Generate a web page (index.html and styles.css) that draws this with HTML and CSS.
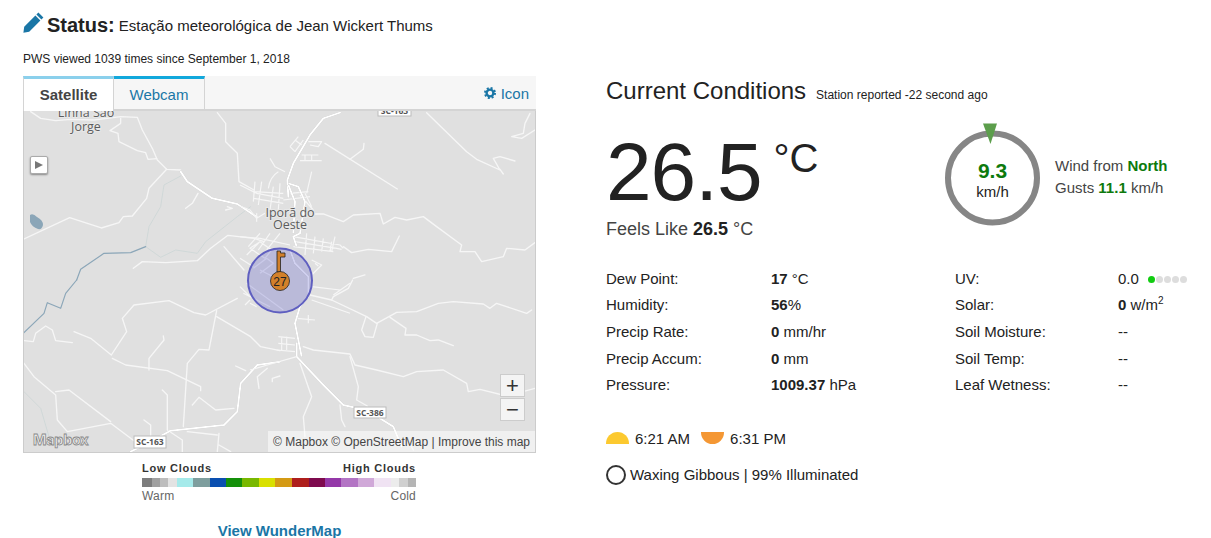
FILE: index.html
```html
<!DOCTYPE html>
<html lang="en">
<head>
  <meta charset="UTF-8">
  <title>Status: Estação meteorológica de Jean Wickert Thums</title>
  <link rel="stylesheet" href="styles.css">
</head>
<body>
  <div class="page">
    <section class="left">
      <h2 class="status">
        <svg class="pencil" width="21" height="21" viewBox="0 0 21 21"><path d="M15.4 0.6 L20.4 5.6 L18.4 7.6 L13.4 2.6 Z M12.4 3.6 L17.4 8.6 L6.2 19.8 L0.4 20.8 L1.2 14.8 Z"/></svg>
        <strong>Status:</strong>
        <span>Estação meteorológica de Jean Wickert Thums</span>
      </h2>
      <p class="views">PWS viewed 1039 times since September 1, 2018</p>

      <div class="panel">
        <div class="tabs">
          <div class="tab tab-on">Satellite</div>
          <div class="tab tab-off">Webcam</div>
          <a class="tab-icon" href="#">
            <svg width="12" height="12" viewBox="0 0 12 12"><circle cx="6" cy="6" r="3.4" fill="none" stroke="#1a76a6" stroke-width="2.4"/><circle cx="6" cy="6" r="5" fill="none" stroke="#1a76a6" stroke-width="2" stroke-dasharray="2 1.93"/></svg>
            Icon
          </a>
        </div>
        <div class="map">
          <svg class="map-art" width="512" height="342" viewBox="24 111 512 342">
            <path class="lake" d="M30 215 Q33 213 37 217 Q43 220 43 225 Q42 230 38 229 Q32 227 30 222 Z"/>
            <g class="road" transform="translate(24 110) scale(.3333)">
              <path class="stream" d="M470 198 L420 225 L410 290 L375 350 L365 410 L410 442 L455 420 L520 430 L545 395 L640 320 L680 290"/>
              <path class="river" d="M158 510 L170 478 L240 430 L320 428 L365 410"/>
              <path d="M20 5 L50 25 L95 32 L140 28 L210 30 L290 20 L340 22 L355 60 L385 115 L400 150 L428 178 L470 180"/>
              <path d="M290 25 L290 40 L258 62 L282 70 L285 95 L340 122 L365 128 L372 148 L398 146"/>
              <path d="M428 178 L375 235 L368 265 L325 318 L298 320 L285 338 L232 354 L137 323 L0 387"/>
              <path d="M522 250 L505 280 L485 295"/>
              <path d="M580 8 L605 40 L605 95 L640 130 L645 215 L690 240"/>
              <path d="M328 475 L355 455 L425 458 L520 452 L560 415 L612 376 L690 385 L720 395"/>
              <path d="M600 410 L660 480"/>
              <path d="M605 300 L625 295 L610 290"/>
              <path class="hwy" d="M470 185 L490 215 L565 265 L640 282 L700 322"/>
            </g>
            <g class="road" transform="translate(280 110) scale(.3333)">
              <path d="M135 100 L352 237"/>
              <path d="M210 148 L250 118 L252 100"/>
              <path d="M440 8 L560 125 L590 148 L660 180 L640 145 L660 140 L705 153"/>
              <path d="M660 178 L670 192"/>
              <path d="M750 10 L735 40 L730 70 L695 80 L725 85 L765 60"/>
              <path d="M100 312 L130 312 L190 335 L220 315 L300 310 L310 342 L345 322 L380 330 L430 320 L470 350 L545 405 L540 425 L585 425 L605 455 L670 440 L680 415 L735 420 L765 398"/>
              <path d="M190 410 L215 428 L265 418 L335 425 L358 378"/>
              <path d="M220 505 L255 495"/>
              <path class="hwy" d="M180 8 L130 25 L90 75 L40 160 L22 210 L25 260"/>
            </g>
            <g class="road" transform="translate(24 280) scale(.3333)">
              <path class="stream" d="M0 335 L50 385 L75 470"/>
              <path class="river" d="M0 158 L60 100 L70 68 L110 85 L125 40 L158 0"/>
              <path d="M0 182 L28 185 L35 160 L65 138 L85 150 L95 182 L145 188"/>
              <path d="M150 155 L200 175 L262 225 L308 155 L295 115 L330 75 L435 62 L510 98 L545 105 L640 55"/>
              <path d="M265 235 L305 255 L430 272 L530 320 L530 332"/>
              <path d="M375 270 L375 235 L420 180 L418 168"/>
              <path d="M578 92 L555 210 L525 208 L490 250 L478 440"/>
              <path d="M578 110 L680 170 L710 200 L768 212"/>
              <path d="M0 250 L30 290 L95 345 L100 420 L130 455 L260 430 L340 490"/>
              <path d="M95 335 L135 330 L260 425"/>
              <path d="M415 330 L430 345 L430 450 L475 480 L475 515"/>
              <path d="M360 420 L380 435 L380 470"/>
              <path d="M505 375 L525 352 L575 390 L630 385"/>
              <path d="M635 258 L665 272"/>
              <path d="M705 325 L700 290 L730 265"/>
              <path d="M745 305 L745 295 L768 288"/>
              <path d="M585 460 L580 515 M585 495 L620 515 M490 455 L580 465"/>
              <path class="hwy" d="M320 515 L370 490 L440 452 L600 435 L640 395 L650 310 L700 255 L768 245"/>
            </g>
            <g class="road" transform="translate(280 280) scale(.3333)">
              <path d="M90 45 L155 60 L260 110 L290 130 L350 97 L410 95 L475 70 L520 65 L610 72 L630 85 L650 70 L740 100 L755 90"/>
              <path d="M155 60 L160 50 L205 25 L218 0"/>
              <path d="M258 110 L245 150 L255 170 L280 172 L292 130"/>
              <path d="M330 112 L378 145 L375 165 L410 165 L450 182 L475 180 L520 197"/>
              <path d="M70 200 L100 210 L210 222 L225 255 L290 270 L370 290 L410 275 L490 270 L560 310 L565 335 L600 328 L680 348 L765 325"/>
              <path d="M210 230 L235 320 L230 360 L262 378"/>
              <path d="M60 250 L95 350 L70 410 L75 470"/>
              <path d="M180 375 L185 420 L195 440"/>
              <path d="M380 475 L400 510"/>
              <path class="hwy" d="M50 190 L50 230 L130 315 L190 375 L220 382 M300 415 L340 440 L365 500"/>
            </g>
            <g class="town" transform="translate(240 130) scale(.3333)">
              <path d="M150 50 L175 20 M165 65 L190 30 M150 50 L165 65 M165 30 L185 45 M205 35 L245 35 L235 50 L210 45"/>
              <path d="M185 75 L235 75 M180 92 L245 92 M195 75 L195 92 M215 75 L215 92"/>
              <path d="M90 85 L105 110 L135 125 M115 125 Q90 140 85 175 M215 125 L200 190"/>
              <path d="M45 155 L40 215 M65 155 L55 225 M0 165 L50 190 L130 205 M40 185 L130 190 M40 205 L130 220 M100 170 L90 240 M120 160 L115 240 M150 190 L205 185 M130 210 L210 200 M180 195 L220 240 M195 190 L215 230"/>
              <path d="M0 228 L30 240 L50 265 L75 250 M50 250 L50 275"/>
              <path d="M0 320 L60 325 L150 345 M160 320 L300 345 L310 355 M165 335 L290 355 L305 358 M160 350 L280 365 M200 310 L195 375 M225 320 L220 370 M250 325 L245 365 M275 335 L270 365 M285 320 L275 365"/>
              <path d="M30 355 L60 335 L95 360 L75 385 Z M60 310 L25 350 M90 310 L55 360 M120 310 L80 360 M20 375 L60 335 M0 385 L40 410"/>
              <path d="M40 415 L80 385 L100 400 L60 430 M100 440 L60 420 M0 470 L30 500 M20 460 L130 540 M10 490 L90 530 M30 510 L15 525 M50 530 L30 520"/>
              <path d="M215 390 L245 405 L215 435 M225 400 L235 408 M215 470 L300 480 M280 495 L330 460 M215 510 L330 550"/>
              <path d="M170 565 L225 570 M205 555 L205 580"/>
              <path d="M115 620 L165 625 M115 640 L165 645 M125 620 L125 660 M140 620 L140 660 M110 660 L165 665 M30 720 L100 700 L170 680"/>
              <path class="main" d="M145 160 L175 170 L195 215 L180 310 L160 320 L170 350"/>
              <path class="main" d="M145 165 L165 215 L160 310"/>
              <path class="main" d="M150 360 L165 400 L205 440 L205 500 L180 530 L165 580 L185 680"/>
            </g>
            <g class="labels">
              <text x="86" y="117" text-anchor="middle">Linha São</text>
              <text x="86" y="131" text-anchor="middle">Jorge</text>
              <text x="290" y="217" text-anchor="middle">Iporã do</text>
              <text x="290" y="229" text-anchor="middle">Oeste</text>
            </g>
            <g class="shield">
              <rect x="378" y="105" width="33" height="11"/><text x="394.500" y="114" text-anchor="middle">SC-163</text>
              <rect x="134" y="436" width="32" height="12"/><text x="150" y="445" text-anchor="middle">SC-163</text>
              <rect x="354" y="407" width="32" height="11"/><text x="370" y="416" text-anchor="middle">SC-386</text>
            </g>
            <circle class="halo" cx="280" cy="280.500" r="32"/>
            <path class="key" d="M277 251 H280.500 V253 H285 V257 H280.500 V272 H277 Z"/>
            <circle class="key" cx="280" cy="281" r="9.500"/>
            <text class="key-num" x="280" y="285.500" text-anchor="middle">27</text>
          </svg>
          <button class="play" type="button"><svg width="10" height="10" viewBox="0 0 10 10"><path d="M1 1 L9 5 L1 9 Z" fill="#777"/></svg></button>
          <div class="zoom-box">
            <div class="zoom-btn">+</div>
            <div class="zoom-btn">−</div>
          </div>
          <div class="mapbox">Mapbox</div>
          <div class="attrib">© Mapbox © OpenStreetMap | Improve this map</div>
        </div>
      </div>

      <div class="legend">
        <div class="legend-row legend-head"><span>Low Clouds</span><span>High Clouds</span></div>
        <div class="legend-bar"></div>
        <div class="legend-row legend-foot"><span>Warm</span><span>Cold</span></div>
      </div>
      <a class="view-map" href="#">View WunderMap</a>
    </section>

    <section class="right">
      <div class="cond-head">
        <h1>Current Conditions</h1>
        <span>Station reported -22 second ago</span>
      </div>

      <div class="now">
        <div class="temps">
          <div class="temp"><span class="temp-val">26.5</span><span class="temp-unit">°C</span></div>
          <div class="feels">Feels Like <b>26.5</b> °C</div>
        </div>
        <div class="wind">
          <div class="dial">
            <svg class="dial-art" width="96" height="104" viewBox="0 0 96 104">
              <circle cx="47.500" cy="55" r="44.500" fill="none" stroke="#868686" stroke-width="6"/>
              <path d="M38 0.500 H52 L45.500 21 Z" fill="#5c9e4c"/>
            </svg>
            <div class="dial-text"><b>9.3</b><span>km/h</span></div>
          </div>
          <div class="wind-text">
            <div>Wind from <b>North</b></div>
            <div>Gusts <b>11.1</b> km/h</div>
          </div>
        </div>
      </div>

      <div class="data">
        <div>Dew Point:</div><div><b>17</b> °C</div><div>UV:</div><div class="uv">0.0 <span class="dots"><i class="on"></i><i></i><i></i><i></i><i></i></span></div>
        <div>Humidity:</div><div><b>56</b>%</div><div>Solar:</div><div><b>0</b> w/m<sup>2</sup></div>
        <div>Precip Rate:</div><div><b>0</b> mm/hr</div><div>Soil Moisture:</div><div>--</div>
        <div>Precip Accum:</div><div><b>0</b> mm</div><div>Soil Temp:</div><div>--</div>
        <div>Pressure:</div><div><b>1009.37</b> hPa</div><div>Leaf Wetness:</div><div>--</div>
      </div>

      <div class="sun">
        <i class="sunrise"></i><span>6:21 AM</span>
        <i class="sunset"></i><span>6:31 PM</span>
      </div>
      <div class="moon"><i class="moon-icon"></i><span>Waxing Gibbous | 99% Illuminated</span></div>
    </section>
  </div>
</body>
</html>
```

FILE: styles.css
```css
html, body {
  margin: 0;
  height: 538px;
  overflow: hidden;
  background: #fff;
}
body {
  font-family: "Liberation Sans", Arial, sans-serif;
  color: #222;
}
a {
  color: #1a76a6;
  text-decoration: none;
}
.page {
  display: flex;
  padding-left: 23px;
}
.left {
  width: 513px;
  flex: none;
}
.right {
  margin-left: 70px;
  width: 600px;
  flex: none;
}

/* heading */
.status {
  display: flex;
  align-items: center;
  margin: 0;
  height: 35px;
  padding-top: 8px;
  font-weight: normal;
}
.pencil {
  fill: #1a76a6;
  margin: 0 3px 6px 0;
}
.status strong {
  font-size: 20px;
  margin-right: 4px;
}
.status span {
  font-size: 15px;
}
.views {
  margin: 0;
  padding-top: 8px;
  font-size: 12px;
  line-height: 16px;
  height: 33px;
  box-sizing: border-box;
}

/* tabs + map */
.panel {
  width: 513px;
  box-sizing: border-box;
}
.tabs {
  display: flex;
  align-items: stretch;
  height: 35px;
  background: #f6f6f6;
  border-bottom: 2px solid #d4d4d4;
  box-sizing: border-box;
}
.tab {
  width: 91px;
  font-size: 15px;
  text-align: center;
  box-sizing: border-box;
  border-top: 3px solid;
  border-right: 1px solid #d4d4d4;
  height: 35px;
  line-height: 32px;
}
.tab-on {
  background: #fff;
  border-top-color: #8bd0ec;
  border-left: 1px solid #d4d4d4;
  font-weight: bold;
  color: #444;
}
.tab-off {
  border-top-color: #12a8dc;
  color: #1a76a6;
}
.tab-icon {
  margin-left: auto;
  padding-right: 7px;
  font-size: 15px;
  line-height: 36px;
}
.map {
  position: relative;
  height: 341px;
  background: #e0e0e0;
  overflow: hidden;
  border: 1px solid #ccc;
  border-top: 0;
}
.map-art {
  display: block;
}
.road path {
  fill: none;
  stroke: #f6f6f6;
  stroke-width: 4;
  stroke-linejoin: round;
  stroke-linecap: round;
}
.road .hwy, .town .main {
  stroke: #fff;
  stroke-width: 6;
  filter: drop-shadow(0 0 1.500px #aaa);
}
.road .stream {
  stroke: #cdd6d6;
  stroke-width: 2.500;
}
.road .river {
  stroke: #8ba6b8;
  stroke-width: 3.500;
}
.lake {
  fill: #8ba6b8;
}
.town path {
  fill: none;
  stroke: #f6f6f6;
  stroke-width: 3.500;
  stroke-linejoin: round;
}
.labels text {
  font-family: "Open Sans", sans-serif;
  font-size: 12.500px;
  fill: #5c5c5c;
  stroke: #e8e8e8;
  stroke-width: 2px;
  paint-order: stroke;
}
.shield rect {
  fill: #fff;
  stroke: #bbb;
  stroke-width: 1;
}
.shield text {
  font-family: "Open Sans", sans-serif;
  font-size: 8.500px;
  font-weight: bold;
  fill: #555;
}
.halo {
  fill: rgba(90, 90, 200, 0.28);
  stroke: #5f5fc0;
  stroke-width: 2;
}
.key {
  fill: #d2802a;
  stroke: #222;
  stroke-width: 0.800;
}
.key-num {
  font-size: 12px;
  fill: #222;
}
.play {
  position: absolute;
  left: 6px;
  top: 45px;
  width: 18px;
  height: 18px;
  padding: 0;
  background: #fff;
  border: 1px solid #aaa;
  border-radius: 2px;
  box-shadow: 0 1px 2px #888;
  display: flex;
  align-items: center;
  justify-content: center;
}
.zoom-box {
  position: absolute;
  left: 476px;
  top: 263px;
  width: 25px;
  display: flex;
  flex-direction: column;
  gap: 1px;
}
.zoom-btn {
  height: 23px;
  background: #f4f4f4;
  border: 1px solid #ccc;
  box-sizing: border-box;
  font-size: 22px;
  line-height: 21px;
  text-align: center;
  color: #333;
}
.mapbox {
  position: absolute;
  left: 9px;
  bottom: 4px;
  font-family: "Inter", sans-serif;
  font-size: 14.500px;
  font-weight: bold;
  letter-spacing: -0.300px;
  color: #eee;
  -webkit-text-stroke: 0.800px #8a8a8a;
}
.attrib {
  position: absolute;
  right: 0;
  bottom: 0;
  height: 21px;
  line-height: 22px;
  padding: 0 5px;
  font-size: 12px;
  color: #444;
  background: rgba(255, 255, 255, 0.5);
}

/* cloud legend */
.legend {
  width: 274px;
  margin: 9px 0 0 119px;
}
.legend-row {
  display: flex;
  justify-content: space-between;
}
.legend-head {
  font-size: 11px;
  line-height: 13px;
  font-weight: bold;
  letter-spacing: 0.750px;
  color: #333;
}
.legend-foot {
  font-size: 12px;
  line-height: 15px;
  letter-spacing: 0.200px;
  color: #666;
}
.legend-bar {
  height: 9px;
  margin: 3px 0 2px;
  background: linear-gradient(90deg,
    #7d7d7d 0 10px, #a0a0a0 10px 18px, #bdbdbd 18px 26px, #e3e3e3 26px 35px,
    #a5eaea 35px 51px, #7e9e9e 51px 68px, #0a4fb0 68px 84px, #14900a 84px 100px,
    #78b800 100px 117px, #d9e000 117px 133px, #d49a14 133px 150px, #ae1e1c 150px 167px,
    #7e0a4e 167px 183px, #9438a8 183px 199px, #b374c4 199px 216px, #d0a8d8 216px 232px,
    #f0e3f3 232px 249px, #ececec 249px 257px, #d0d0d0 257px 266px, #b5b5b5 266px 274px);
}
.view-map {
  display: block;
  width: 513px;
  margin-top: 18px;
  text-align: center;
  font-size: 15px;
  line-height: 18px;
  font-weight: bold;
}

/* current conditions */
.cond-head {
  display: flex;
  align-items: baseline;
  gap: 10px;
  padding-top: 77px;
}
.cond-head h1 {
  margin: 0;
  font-size: 24px;
  line-height: 28px;
  font-weight: normal;
}
.cond-head span {
  font-size: 12px;
}
.now {
  display: flex;
  margin-top: 18px;
}
.temps {
  width: 339px;
  flex: none;
  padding-top: 8px;
}
.temp {
  display: flex;
  align-items: flex-start;
  height: 88px;
}
.temp-val {
  font-size: 82px;
  line-height: 82px;
  letter-spacing: -1px;
}
.temp-unit {
  font-size: 40px;
  line-height: 48px;
  margin: 3px 0 0 12px;
}
.feels {
  font-size: 18px;
  line-height: 20px;
  color: #444;
}
.feels b {
  color: #222;
}
.wind {
  display: flex;
  align-items: flex-start;
}
.dial {
  position: relative;
  width: 96px;
  height: 104px;
}
.dial-art {
  display: block;
}
.dial-text {
  position: absolute;
  left: 0;
  top: 27px;
  width: 95px;
  height: 58px;
  display: flex;
  flex-direction: column;
  align-items: center;
  justify-content: center;
  font-size: 15px;
}
.dial-text b {
  font-size: 21px;
  line-height: 24px;
  color: #0d7a0d;
}
.wind-text {
  margin: 32px 0 0 14px;
  font-size: 15px;
  line-height: 22px;
  color: #444;
}
.wind-text b {
  color: #0d7a0d;
}
.data {
  display: grid;
  grid-template-columns: 165px 184px 163px 1fr;
  grid-auto-rows: 26.600px;
  margin-top: 26.800px;
  font-size: 15px;
  line-height: 26px;
}
.data sup {
  font-size: 10px;
  line-height: 0;
}
.uv {
  display: flex;
  align-items: center;
  gap: 9px;
}
.dots {
  display: flex;
  gap: 1px;
}
.dots i {
  width: 7px;
  height: 7px;
  border-radius: 50%;
  background: #ddd;
}
.dots .on {
  background: #11cc11;
}
.sun {
  display: flex;
  align-items: center;
  margin-top: 27.200px;
  font-size: 15px;
  line-height: 26px;
}
.sunrise, .sunset {
  width: 23px;
  height: 12px;
  margin-top: -2px;
}
.sunrise {
  background: #fcc92f;
  border-radius: 12px 12px 0 0;
  margin-right: 6px;
}
.sunset {
  background: #f49734;
  border-radius: 0 0 12px 12px;
  margin-left: 11px;
  margin-right: 6px;
}
.moon {
  display: flex;
  align-items: center;
  margin-top: 13px;
  font-size: 15px;
  line-height: 20px;
}
.moon-icon {
  width: 16px;
  height: 16px;
  border: 2px solid #333;
  border-radius: 50%;
  margin-right: 4px;
}
```
